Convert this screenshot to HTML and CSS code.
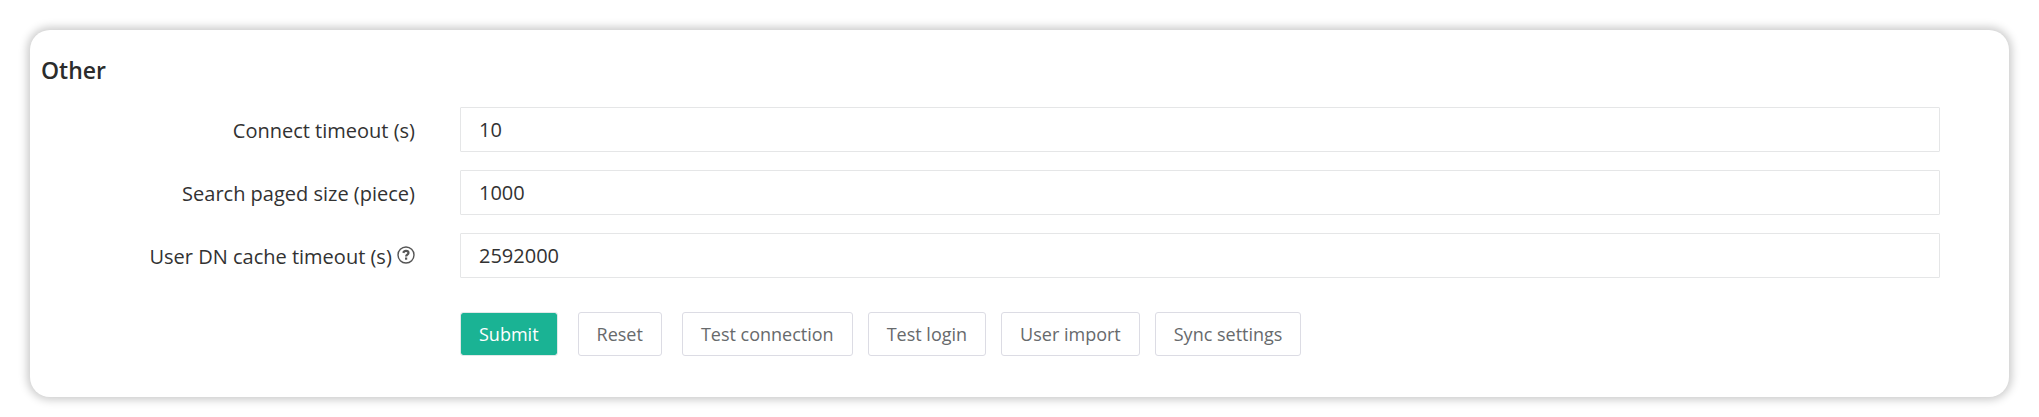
FILE: index.html
```html
<!DOCTYPE html>
<html lang="en">
<head>
    <meta charset="UTF-8">
    <meta name="viewport" content="width=device-width, initial-scale=1.0">
    <title>LDAP settings</title>
    <link rel="stylesheet" href="styles.css">
</head>
<body>
    <section class="card">
        <h3 class="card-title">Other</h3>
        <form action="#" method="post">
            <div class="form-group">
                <label for="connect_timeout">Connect timeout (s)</label>
                <input type="text" id="connect_timeout" name="connect_timeout" value="10">
            </div>
            <div class="form-group">
                <label for="search_paged_size">Search paged size (piece)</label>
                <input type="text" id="search_paged_size" name="search_paged_size" value="1000">
            </div>
            <div class="form-group">
                <label for="cache_timeout">User DN cache timeout (s)
                    <svg class="help-icon" viewBox="0 0 18 18" aria-hidden="true">
                        <circle cx="9" cy="9" r="8" fill="none" stroke="currentColor" stroke-width="1.4"/>
                        <path d="M6.3 6.9C6.7 5.5 7.6 4.9 9 4.9c1.5 0 2.5.8 2.5 2 0 1.7-2.4 1.7-2.4 3.6" fill="none" stroke="currentColor" stroke-width="2.2"/>
                        <rect x="8" y="11.5" width="2.2" height="2.2" fill="currentColor"/>
                    </svg>
                </label>
                <input type="text" id="cache_timeout" name="cache_timeout" value="2592000">
            </div>
            <div class="form-group form-actions">
                <div class="buttons">
                    <button type="submit" class="btn btn-primary">Submit</button>
                    <button type="reset" class="btn btn-reset">Reset</button>
                    <button type="button" class="btn">Test connection</button>
                    <button type="button" class="btn">Test login</button>
                    <button type="button" class="btn">User import</button>
                    <button type="button" class="btn">Sync settings</button>
                </div>
            </div>
        </form>
    </section>
</body>
</html>
```

FILE: styles.css
```css
* {
    box-sizing: border-box;
}
body {
    font-family: "Open Sans", Arial, sans-serif;
    background-color: #fff;
    color: #323232;
    margin: 0;
    padding: 30px;
}
.card {
    padding: 27px 0 41px;
    border-radius: 20px;
    background-color: #fff;
    box-shadow: 0 0 9px 3px #ccc;
}
.card-title {
    margin: 0 0 24px;
    padding: 0 11px;
    font-size: 23px;
    line-height: 26px;
    font-weight: 600;
    color: #2b2c2c;
}
.form-group {
    display: grid;
    grid-template-columns: 1fr 4fr;
    column-gap: 45px;
    align-items: center;
    margin-bottom: 18px;
    padding: 0 69px 0 15px;
}
.form-group label {
    padding-top: 2px;
    font-size: 20px;
    line-height: 28px;
    text-align: right;
}
.form-group input {
    width: 100%;
    height: 45px;
    padding: 0 18px;
    border: 1px solid #e5e6e7;
    border-radius: 1px;
    background-color: #fff;
    color: #323232;
    font-family: inherit;
    font-size: 20px;
}
.help-icon {
    width: 18px;
    height: 18px;
    color: #555;
}
.form-actions {
    margin: 34px 0 0;
}
.buttons {
    grid-column: 2;
    display: flex;
    flex-wrap: wrap;
    gap: 15px;
}
.btn {
    height: 44px;
    padding: 0 18px;
    border: 1px solid #dcdce4;
    border-radius: 3px;
    background-color: #fff;
    color: #676a6c;
    font-family: inherit;
    font-size: 18px;
    cursor: pointer;
}
.btn-primary {
    border-color: #e1e8e8;
    background-color: #1ab394;
    background-clip: padding-box;
    color: #fff;
}
.btn-reset {
    margin: 0 5px;
}
```
